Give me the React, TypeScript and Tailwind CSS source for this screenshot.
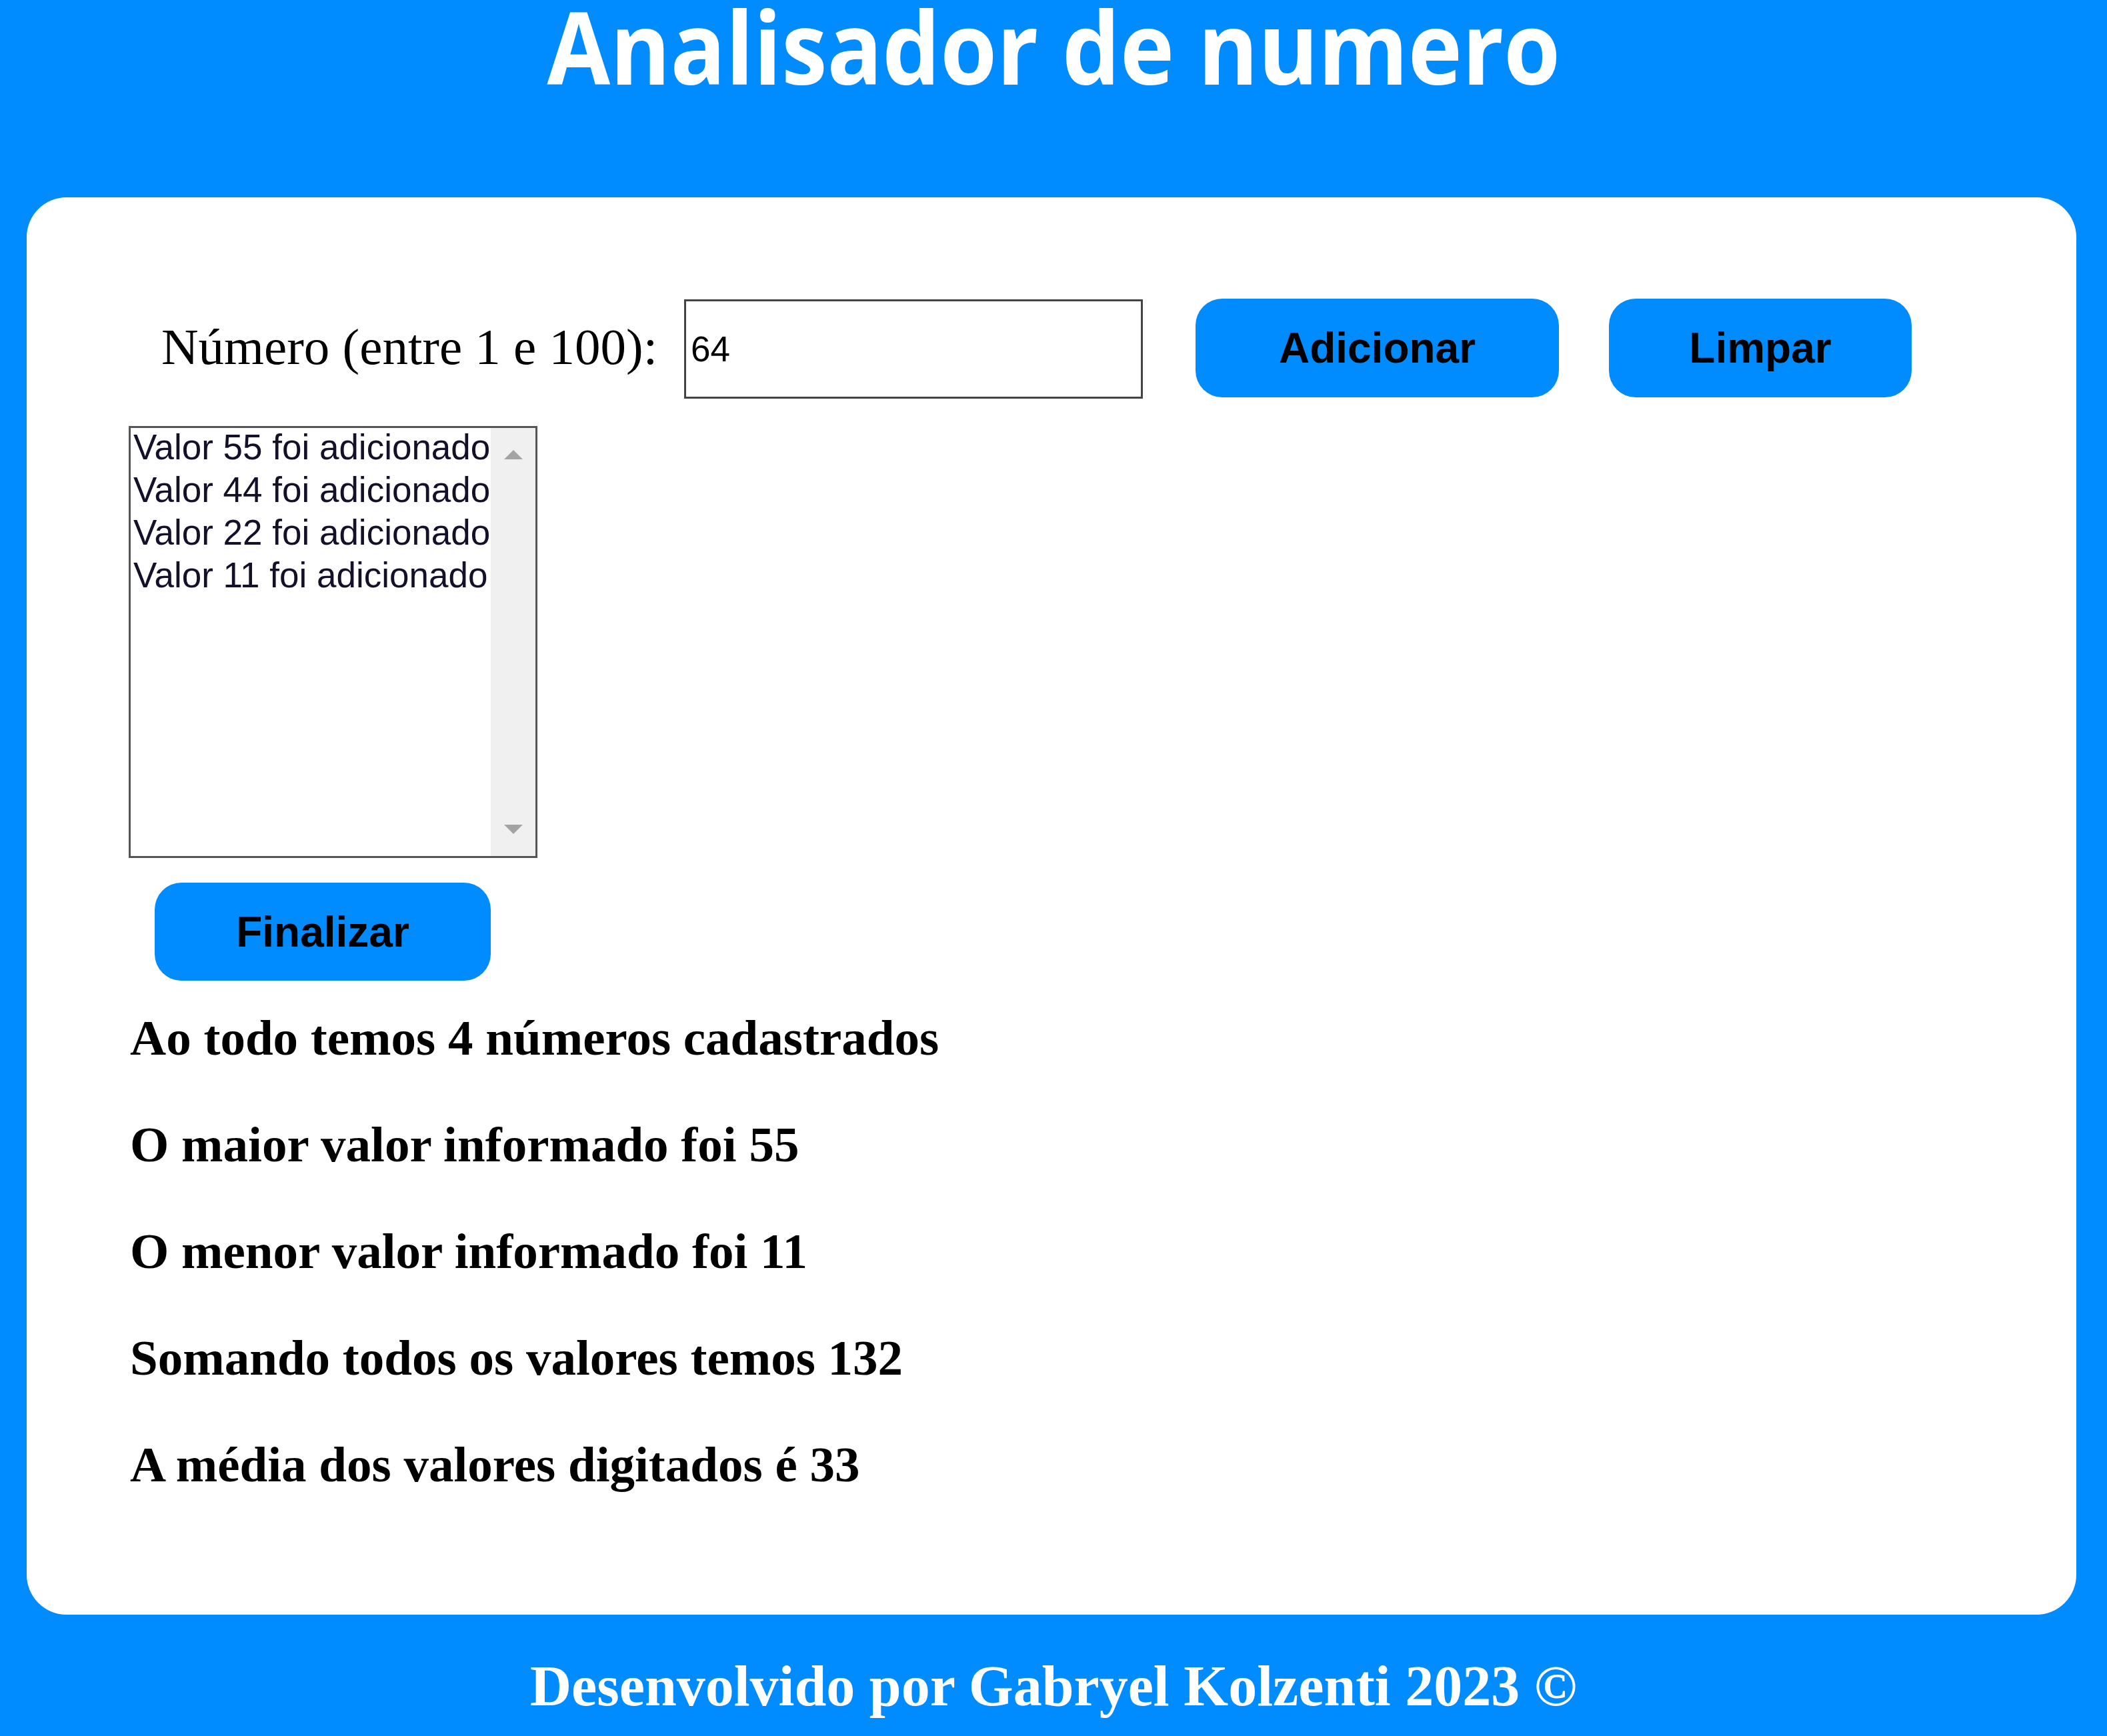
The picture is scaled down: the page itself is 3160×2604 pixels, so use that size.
import React from "react";

export default function App() {
  const items = [55, 44, 22, 11];
  const results = [
    "Ao todo temos 4 números cadastrados",
    "O maior valor informado foi 55",
    "O menor valor informado foi 11",
    "Somando todos os valores temos 132",
    "A média dos valores digitados é 33",
  ];
  return (
    <div className="w-[3160px] h-[2604px] bg-[#008cff] overflow-hidden flex flex-col font-['Liberation_Serif',serif]">
      <header className="h-[296px] shrink-0 flex justify-center">
        <h1 className="mt-[-6px] h-[150px] text-[150px] leading-[150px] font-bold text-white scale-x-[0.915] whitespace-nowrap font-['Open_Sans',sans-serif]">
          Analisador de numero
        </h1>
      </header>

      <main className="ml-[40px] w-[3074px] h-[2126px] shrink-0 bg-white rounded-[60px] flex flex-col">
        <div className="flex items-start pt-[153px]">
          <div className="ml-[202px] w-[784px] shrink-0">
            <div className="mt-[33px] text-[77px] leading-[77px] text-black whitespace-nowrap font-['Liberation_Serif',serif]">
              Número (entre 1 e 100):
            </div>
          </div>
          <div className="w-[688px] h-[149px] shrink-0 border-[3px] border-[#444] bg-white flex items-center pl-[7px]">
            <span className="text-[53px] text-black font-['Liberation_Sans',sans-serif]">64</span>
          </div>
          <button className="ml-[79px] mt-[-1px] w-[545px] h-[148px] shrink-0 rounded-[40px] bg-[#008cff] text-black text-[64px] font-bold font-['Liberation_Sans',sans-serif] flex items-center justify-center">
            Adicionar
          </button>
          <button className="ml-[75px] mt-[-1px] w-[454px] h-[148px] shrink-0 rounded-[40px] bg-[#008cff] text-black text-[64px] font-bold font-['Liberation_Sans',sans-serif] flex items-center justify-center">
            Limpar
          </button>
        </div>

        <div className="ml-[153px] mt-[41px] w-[613px] h-[648px] shrink-0 border-[3px] border-[#555] bg-white relative overflow-hidden">
          <ul className="mt-[-3px] pl-[4px] font-['Liberation_Sans',sans-serif] text-[53px] leading-[64px] text-[#14102a]">
            {items.map((v) => (
              <li key={v} className="whitespace-nowrap">
                Valor {v} foi adicionado
              </li>
            ))}
          </ul>
          <div className="absolute right-0 top-0 bottom-0 w-[67px] bg-[#f0f0f0] flex flex-col items-center justify-between py-[33px]">
            <svg width="28" height="14" viewBox="0 0 28 14">
              <polygon points="0,14 14,0 28,14" fill="#a3a3a3" />
            </svg>
            <svg width="28" height="14" viewBox="0 0 28 14">
              <polygon points="0,0 28,0 14,14" fill="#a3a3a3" />
            </svg>
          </div>
        </div>

        <button className="ml-[192px] mt-[37px] w-[504px] h-[147px] shrink-0 rounded-[40px] bg-[#008cff] text-black text-[64px] font-bold font-['Liberation_Sans',sans-serif] flex items-center justify-center">
          Finalizar
        </button>

        <div className="ml-[155px] mt-[6px]">
          {results.map((r) => (
            <div key={r} className="h-[160px] text-[75px] leading-[160px] font-bold text-black whitespace-nowrap font-['Liberation_Serif',serif]">
              {r}
            </div>
          ))}
        </div>
      </main>

      <footer className="flex-1 pt-[64px] text-center">
        <div className="text-[86px] leading-[86px] font-bold text-white whitespace-nowrap font-['Liberation_Serif',serif]">
          Desenvolvido por Gabryel Kolzenti 2023 ©
        </div>
      </footer>
    </div>
  );
}
